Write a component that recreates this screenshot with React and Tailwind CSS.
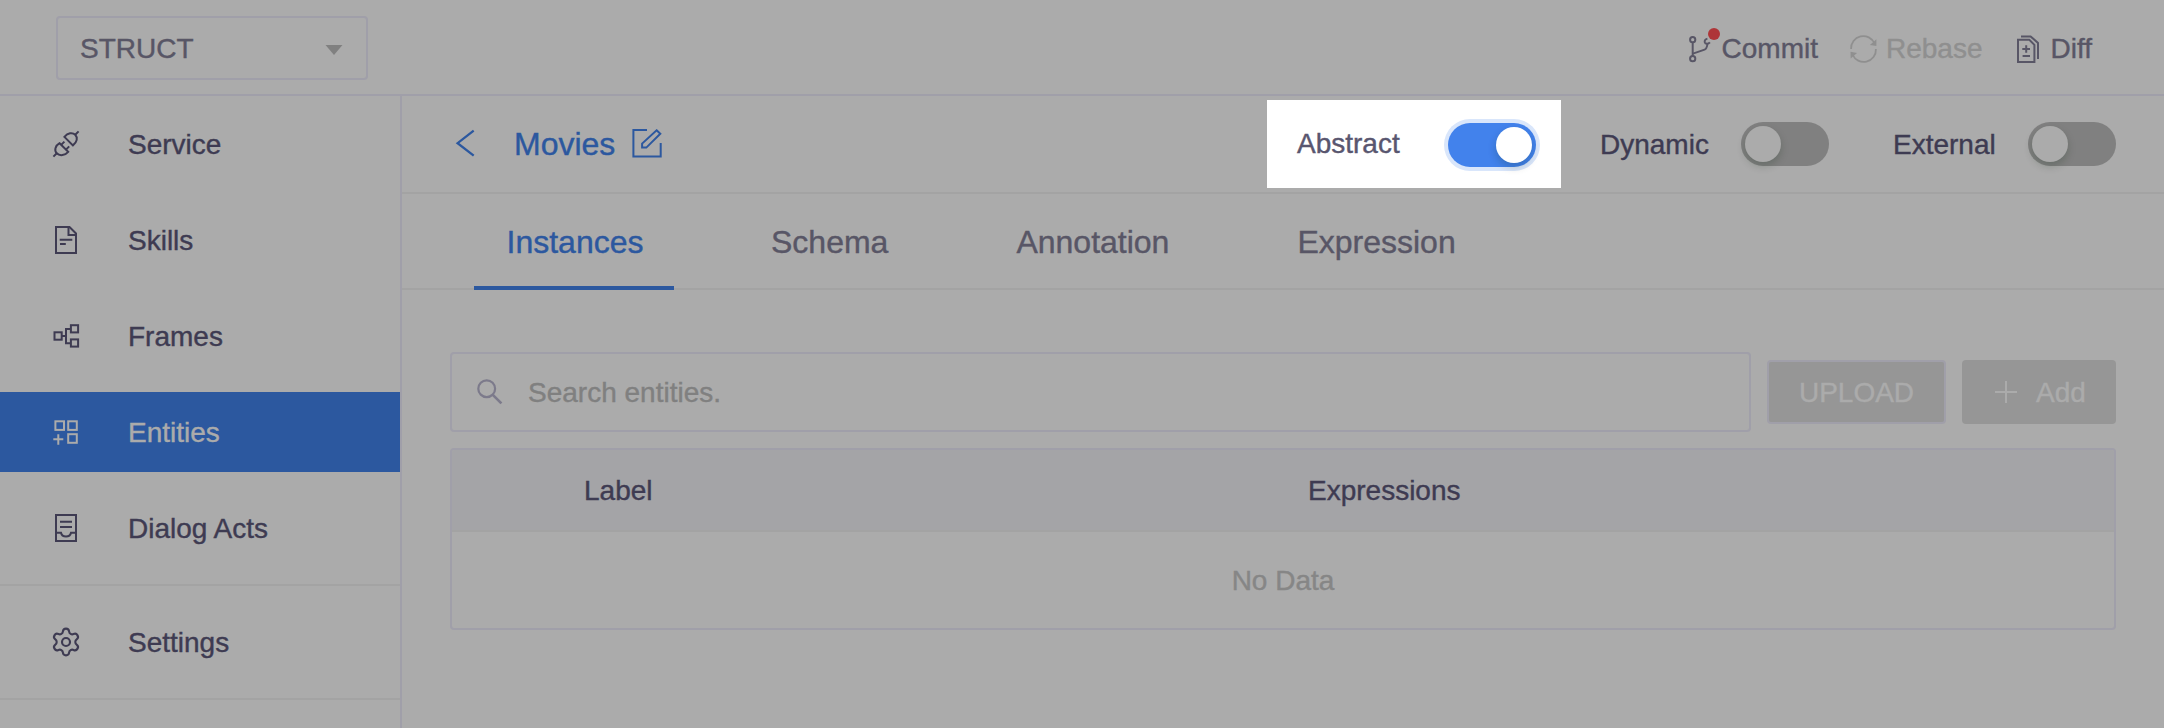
import { Settings } from "lucide-react";

function Glyph({ size = 36, children, className = "", strokeWidth = 2 }) {
  return (
    <svg
      width={size}
      height={size}
      viewBox={`0 0 ${size} ${size}`}
      fill="none"
      stroke="currentColor"
      strokeWidth={strokeWidth}
      className={`shrink-0 ${className}`}
    >
      {children}
    </svg>
  );
}

function ServiceIcon() {
  return (
    <Glyph>
      <path d="M11.6 17.2L20.2 25.8C17 29.6 11.6 30.2 8.8 27.3C6.1 24.5 7 19.8 11.6 17.2Z" />
      <path d="M16.4 10.9L24.9 19.4C29.2 16 30 11.6 27.2 8.8C24.5 6.1 19.8 6.8 16.4 10.9Z" />
      <path d="M5.4 30.6L8.8 27.3M27.2 8.8L30.6 5.4" />
      <path d="M13.4 18.6L16.4 15.6M18.2 23.4L21.2 20.4" />
    </Glyph>
  );
}

function SkillsIcon() {
  return (
    <Glyph>
      <path d="M8 5H21.5L28 11.5V31H8Z" />
      <path d="M20.5 5V13H28" />
      <path d="M11.7 17.8H24.3M12 22.1H17.8" />
    </Glyph>
  );
}

function FramesIcon() {
  return (
    <Glyph>
      <rect x="6.5" y="14.3" width="7.2" height="7.4" />
      <rect x="22.9" y="7.2" width="7.2" height="7.2" />
      <rect x="22.9" y="21.4" width="7.2" height="7.2" />
      <path d="M14 18H18M22 11H18V25.2H22" />
    </Glyph>
  );
}

function EntitiesIcon() {
  return (
    <Glyph>
      <rect x="7.4" y="7.3" width="8.6" height="8.6" />
      <rect x="20.2" y="7.3" width="8.6" height="8.6" />
      <rect x="20.2" y="20.2" width="8.6" height="8.6" />
      <path d="M5.3 25.3H15.3M10.3 20.3V30.7" />
    </Glyph>
  );
}

function DialogIcon() {
  return (
    <Glyph>
      <path d="M8 5H28V31H8Z" />
      <path d="M12 11.8H24M12 17H24" />
      <path d="M8 22.8H13C13.5 25.3 15.5 26.6 18 26.6C20.5 26.6 22.5 25.3 23 22.8H28" />
    </Glyph>
  );
}

function CommitIcon() {
  return (
    <Glyph size={32} className="overflow-visible">
      <circle cx="8.7" cy="7.7" r="2.6" />
      <circle cx="8.7" cy="26.7" r="2.6" />
      <path d="M8.7 10.3V24" />
      <path d="M8.9 21.6L20.6 17.6C22.4 17 23 15.5 23.4 12" />
      <path d="M23.4 6.6C21.3 7.1 20.3 8.7 20.8 10.3C21.4 12 24 12.6 25.9 10.4" />
    </Glyph>
  );
}

function RebaseIcon() {
  return (
    <Glyph size={32} strokeWidth={1.8}>
      <path d="M3.1 17A12.2 12.2 0 0 1 26.5 11.5" />
      <path d="M27.9 17A12.2 12.2 0 0 1 4.5 22.5" />
      <path d="M28.4 7.2V14L21.9 12.9Z" fill="currentColor" stroke="none" />
      <path d="M2.5 19.8L9 21L2.7 26.6Z" fill="currentColor" stroke="none" />
    </Glyph>
  );
}

function DiffIcon() {
  return (
    <Glyph size={32}>
      <path d="M5 7.7H16.3L21.4 12.8V30H5Z" />
      <path d="M8 4.4H17.6L25 11V27" />
      <path d="M9.3 17H17M13.2 13.2V20.8M9.6 24H17" />
    </Glyph>
  );
}

function EditIcon() {
  return (
    <Glyph>
      <path d="M18 4H4.4V30.4H31.7V17" />
      <path d="M27.6 4.3L31.3 7.8L17.3 21.6H13.1V17.6Z" />
    </Glyph>
  );
}

const navItems = [
  { label: "Service", icon: <ServiceIcon /> },
  { label: "Skills", icon: <SkillsIcon /> },
  { label: "Frames", icon: <FramesIcon /> },
  { label: "Entities", icon: <EntitiesIcon />, active: true },
  { label: "Dialog Acts", icon: <DialogIcon /> },
];

function NavItem({ label, icon, active }) {
  return (
    <div
      className={`flex h-20 items-center gap-11 pl-12 ${
        active ? "bg-[#2c589f] text-[#ababab]" : "text-[#3e3b52]"
      }`}
    >
      {icon}
      <span className="pt-0.5">{label}</span>
    </div>
  );
}

function Toggle({ on }) {
  return on ? (
    <span className="mt-0.5 flex h-11 w-[88px] items-center justify-end rounded-full bg-[#4282ec] px-1 shadow-[0_0_0_4px_#d9e6fb]">
      <span className="size-9 rounded-full bg-white shadow-[0_4px_8px_rgba(0,35,11,0.2)]" />
    </span>
  ) : (
    <span className="flex h-11 w-[88px] items-center rounded-full bg-[#808080] px-1">
      <span className="size-9 rounded-full bg-[#ababab] shadow-[0_4px_8px_rgba(0,35,11,0.2)]" />
    </span>
  );
}

export default function App() {
  return (
    <div className="flex h-[728px] w-[2164px] flex-col overflow-hidden bg-[#ababab] font-['Liberation_Sans',Arial,sans-serif] text-[28px] leading-8 text-[#3e3b52] [-webkit-text-stroke-width:0.4px]">
      <header className="flex h-24 shrink-0 items-center justify-between border-b-2 border-[#a09fa9] pl-14 pr-[72px] text-[#585666]">
        <div className="mt-0.5 flex h-16 w-[312px] items-center justify-between rounded-[4px] border-2 border-[#a09fa9] pl-[22px] pr-[23px]">
          <span className="pt-0.5">STRUCT</span>
          <svg width="18" height="10" viewBox="0 0 18 10" className="mt-1">
            <path d="M0.5 0H17.5L9 10Z" fill="#808080" />
          </svg>
        </div>
        <div className="mt-0.5 flex items-center gap-[30px]">
          <div className="relative flex items-center gap-1.5">
            <CommitIcon />
            <span className="absolute left-[24px] top-[-3px] size-3 rounded-full bg-[#ae3538]" />
            <span className="pt-0.5">Commit</span>
          </div>
          <div className="flex items-center gap-1.5 text-[#8f8f8f]">
            <RebaseIcon />
            <span className="pt-0.5">Rebase</span>
          </div>
          <div className="flex items-center gap-1.5">
            <DiffIcon />
            <span className="pt-0.5">Diff</span>
          </div>
        </div>
      </header>

      <div className="flex min-h-0 flex-1">
        <aside className="w-[402px] shrink-0 border-r-2 border-[#a09fa9]">
          <nav className="flex flex-col gap-4 border-b-2 border-[#a3a3a3] pb-4 pt-2">
            {navItems.map((item) => (
              <NavItem key={item.label} {...item} />
            ))}
          </nav>
          <div className="border-b-2 border-[#a3a3a3] py-4">
            <NavItem label="Settings" icon={<Settings size={32} strokeWidth={1.6} className="mx-0.5" />} />
          </div>
        </aside>

        <main className="flex-1">
          <div className="flex h-[98px] items-center justify-between border-b-2 border-[#a3a3a3] pl-[50px] pr-12">
            <div className="flex items-center text-[32px] text-[#2c589f]">
              <Glyph>
                <path d="M21.7 4.7L5.6 17.2L21.7 29.7" strokeWidth="2.3" />
              </Glyph>
              <span className="ml-[26px] w-[115px]">Movies</span>
              <EditIcon />
            </div>
            <div className="flex items-center">
              <div className="mr-[39px] flex h-[88px] w-[294px] items-center justify-between bg-white pl-[30px] pr-[25px] text-[#59566f]">
                <span>Abstract</span>
                <Toggle on />
              </div>
              <span className="w-[141px] pt-0.5">Dynamic</span>
              <Toggle />
              <span className="ml-16 w-[135px] pt-0.5">External</span>
              <Toggle />
            </div>
          </div>

          <div className="flex h-24 gap-16 border-b-2 border-[#a3a3a3] pl-[72px] text-[32px] text-[#585666]">
            <div className="-mb-0.5 flex w-[200px] items-center justify-center border-b-4 border-[#2c589f] pl-0.5 pt-1 text-[#2c589f]">
              Instances
            </div>
            <div className="flex items-center pl-[33px] pr-[31px] pt-0.5">Schema</div>
            <div className="flex items-center pl-[33px] pr-[31px] pt-0.5">Annotation</div>
            <div className="flex items-center pl-[33px] pr-[31px] pt-0.5">Expression</div>
          </div>

          <div className="pl-12 pr-12 pt-[62px]">
            <div className="flex items-center gap-4">
              <div className="flex h-20 flex-1 items-center gap-5 rounded-[4px] border-2 border-[#a09fa9] pl-6 text-[#808080]">
                <Glyph size={32} strokeWidth={2.2} className="text-[#7c7a8b]">
                  <circle cx="10.7" cy="12.7" r="8.4" />
                  <path d="M16.8 18.8L25.4 27.4" strokeWidth="2.6" />
                </Glyph>
                <span className="pt-0.5">Search entities.</span>
              </div>
              <button className="flex h-16 w-[179px] items-center justify-center rounded-[4px] border-2 border-[#a09fa9] bg-[#969696] pt-0.5 text-[#ababab]">
                UPLOAD
              </button>
              <button className="flex h-16 w-[154px] items-center gap-[18px] rounded-[4px] bg-[#969696] pl-8 text-[#ababab]">
                <Glyph size={24}>
                  <path d="M1 12H23M12 1V23" />
                </Glyph>
                <span className="pt-0.5">Add</span>
              </button>
            </div>

            <div className="mt-4 overflow-hidden rounded-[4px] border-2 border-[#a09fa9]">
              <div className="flex h-[82px] items-center border-b-2 border-[#a3a3a3] bg-[#a4a4a7] pl-[132px] pt-0.5">
                <span className="w-[724px]">Label</span>
                <span>Expressions</span>
              </div>
              <div className="flex h-24 items-center justify-center pt-0.5 text-[#868686]">No Data</div>
            </div>
          </div>
        </main>
      </div>
    </div>
  );
}
